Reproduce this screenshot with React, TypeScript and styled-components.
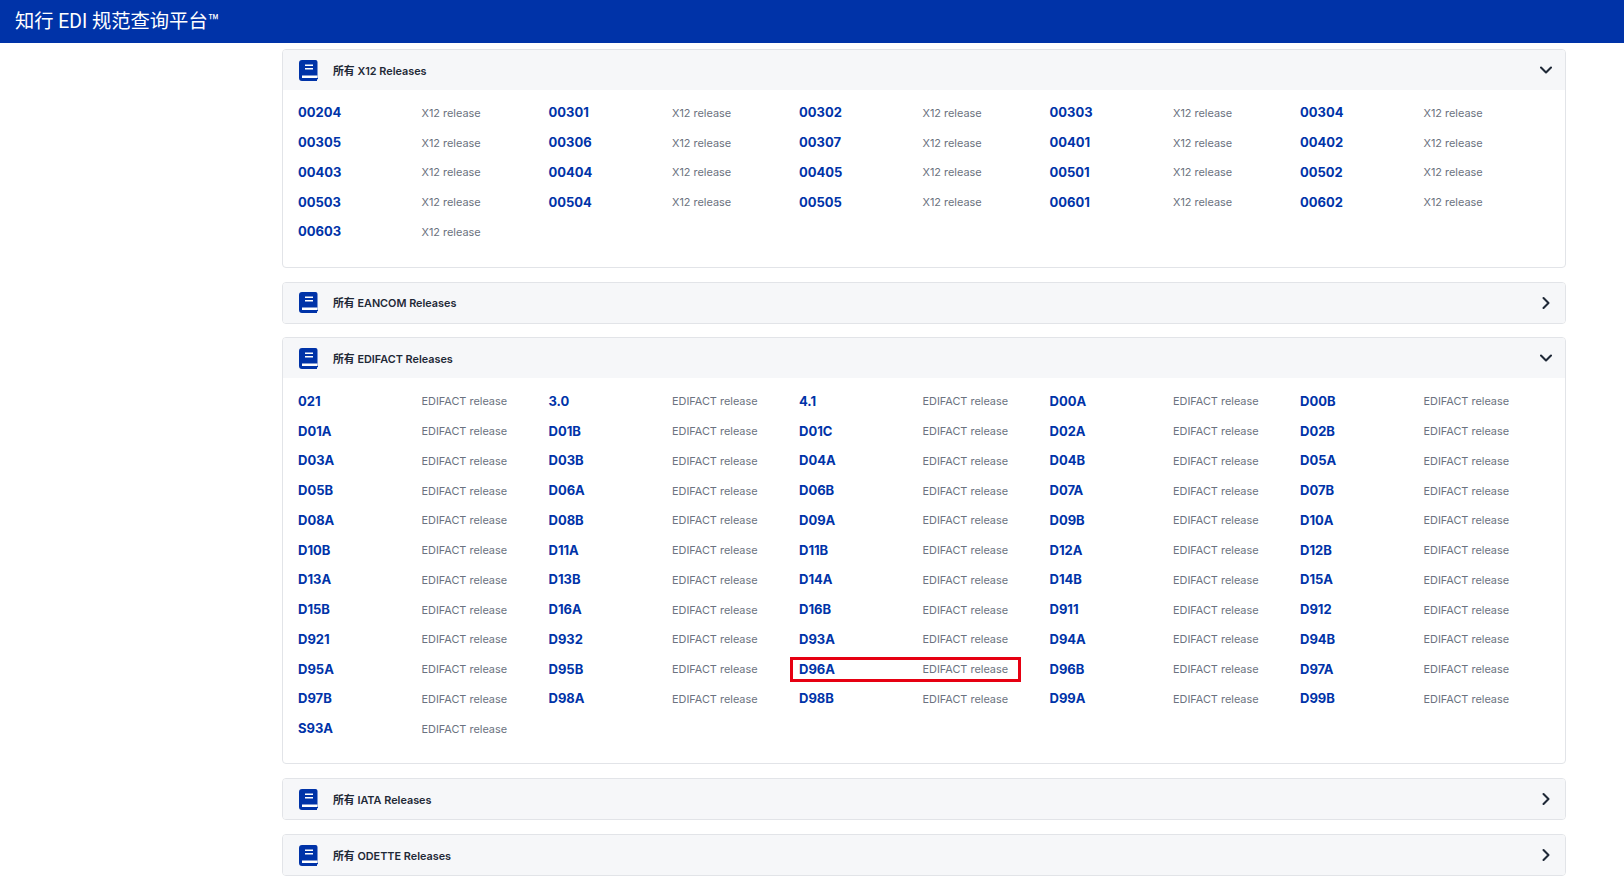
import React from 'react'
import styled, { createGlobalStyle } from 'styled-components'
import { ChevronDown, ChevronRight } from 'lucide-react'

const GlobalStyle = createGlobalStyle`
  html, body {
    margin: 0;
    padding: 0;
    background: #fff;
    font-family: Inter, "Noto Sans CJK SC", sans-serif;
  }
`
const TopBar = styled.header`
  display: flex;
  align-items: center;
  height: 43px;
  padding: 0 0 3px 15px;
  box-sizing: border-box;
  background-color: #0033a8;
  color: #fff;
  font-size: 19.3px;
  font-family: Roboto, "Noto Sans CJK SC", sans-serif;
`
const Main = styled.main`
  display: flex;
  flex-direction: column;
  gap: 13.85px;
  padding: 6px 58px 0 282px;
`
const Card = styled.section`
  border: 1px solid #e2e4e8;
  border-radius: 4px;
  overflow: hidden;
`
const CardHeader = styled.div`
  display: flex;
  align-items: center;
  height: 40px;
  padding: 0 9px 0 16px;
  background-color: #f6f7f9;
`
const CardTitle = styled.h2`
  flex: 1;
  margin: 0 0 1px 15px;
  color: #1f2937;
  font-size: 10.85px;
  font-weight: 600;
`
const CardBody = styled.div`
  display: grid;
  grid-template-columns: repeat(5, 250.5px);
  grid-auto-rows: 29.75px;
  padding: 7.5px 15px 20.5px;
`
const Release = styled.div<{ $marked?: boolean }>`
  position: relative;
  display: grid;
  grid-template-columns: 123.5px 1fr;
  align-items: center;

  ${(p) =>
    p.$marked &&
    `
    &::after {
      content: '';
      position: absolute;
      left: -9px;
      top: 3px;
      width: 231px;
      height: 25px;
      border: 3px solid #e60012;
      box-sizing: border-box;
    }
  `}
`
const ReleaseLink = styled.a`
  color: #0033a8;
  font-size: 13px;
  font-weight: 700;
`
const ReleaseNote = styled.span`
  color: #6b7280;
  font-size: 10.9px;
  padding-top: 1px;
`

function BookIcon() {
  return (
    <svg width="19" height="21" viewBox="0 0 19 21">
      <path
        d="M3 0H16.5A2 2 0 0 1 18.5 2V17.5H19V19L18 19.5V21H3A3 3 0 0 1 0 18V3A3 3 0 0 1 3 0Z"
        fill="#0033a8"
      />
      <rect x="6" y="4.5" width="8" height="1.5" fill="#fff" />
      <rect x="6" y="8" width="8" height="1.5" fill="#fff" />
      <rect x="3" y="15.5" width="15.5" height="2.5" fill="#fff" />
    </svg>
  )
}

const x12 = [
  '00204', '00301', '00302', '00303', '00304',
  '00305', '00306', '00307', '00401', '00402',
  '00403', '00404', '00405', '00501', '00502',
  '00503', '00504', '00505', '00601', '00602',
  '00603',
]

const edifact = [
  '021', '3.0', '4.1', 'D00A', 'D00B',
  'D01A', 'D01B', 'D01C', 'D02A', 'D02B',
  'D03A', 'D03B', 'D04A', 'D04B', 'D05A',
  'D05B', 'D06A', 'D06B', 'D07A', 'D07B',
  'D08A', 'D08B', 'D09A', 'D09B', 'D10A',
  'D10B', 'D11A', 'D11B', 'D12A', 'D12B',
  'D13A', 'D13B', 'D14A', 'D14B', 'D15A',
  'D15B', 'D16A', 'D16B', 'D911', 'D912',
  'D921', 'D932', 'D93A', 'D94A', 'D94B',
  'D95A', 'D95B', 'D96A', 'D96B', 'D97A',
  'D97B', 'D98A', 'D98B', 'D99A', 'D99B',
  'S93A',
]

function Section({ name, releases, marked }: { name: string; releases?: string[]; marked?: string }) {
  return (
    <Card>
      <CardHeader>
        <BookIcon />
        <CardTitle>所有 {name} Releases</CardTitle>
        {releases ? (
          <ChevronDown size={20} strokeWidth={2.5} color="#1f2937" />
        ) : (
          <ChevronRight size={20} strokeWidth={2.5} color="#1f2937" />
        )}
      </CardHeader>
      {releases && (
        <CardBody>
          {releases.map((r) => (
            <Release key={r} $marked={r === marked}>
              <ReleaseLink>{r}</ReleaseLink>
              <ReleaseNote>{name} release</ReleaseNote>
            </Release>
          ))}
        </CardBody>
      )}
    </Card>
  )
}

export default function App() {
  return (
    <>
      <GlobalStyle />
      <TopBar>知行 EDI 规范查询平台™</TopBar>
      <Main>
        <Section name="X12" releases={x12} />
        <Section name="EANCOM" />
        <Section name="EDIFACT" releases={edifact} marked="D96A" />
        <Section name="IATA" />
        <Section name="ODETTE" />
      </Main>
    </>
  )
}
